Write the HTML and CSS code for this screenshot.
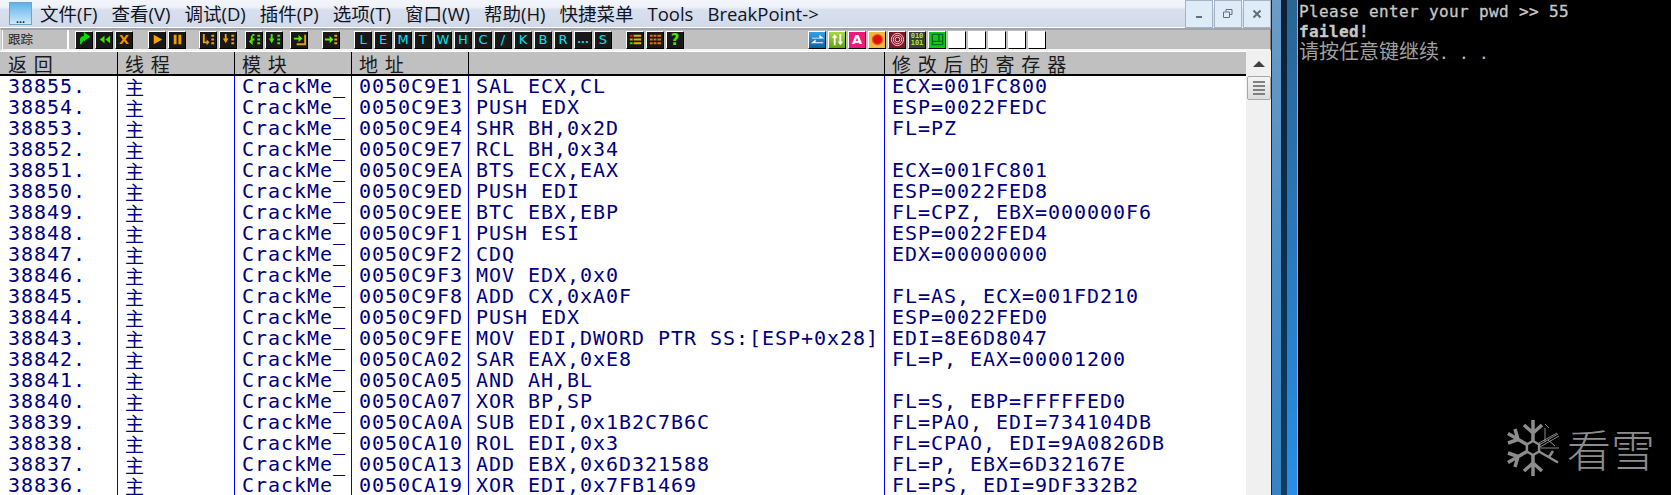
FILE: index.html
```html
<!DOCTYPE html>
<html lang="zh">
<head>
<meta charset="utf-8">
<title>OllyDbg trace</title>
<link rel="stylesheet" href="styles.css">
</head>
<body>
<main class="debugger">
  <header class="titlebar">
    <div class="appicon"><span>...</span></div>
    <nav class="menu">
      <span>文件(F)</span><span>查看(V)</span><span>调试(D)</span><span>插件(P)</span><span>选项(T)</span><span>窗口(W)</span><span>帮助(H)</span><span>快捷菜单</span><span>Tools</span><span>BreakPoint-&gt;</span>
    </nav>
    <div class="winbtns">
      <div class="winbtn"><svg width="10" height="10" viewBox="0 0 10 10"><rect x="2" y="7" width="6" height="2" fill="#5f6f80"/></svg></div>
      <div class="winbtn"><svg width="10" height="10" viewBox="0 0 10 10"><path d="M3 2.5V.5h6v5H7M.5 3h6v5.5h-6z" fill="none" stroke="#5f6f80"/></svg></div>
      <div class="winbtn"><svg width="10" height="10" viewBox="0 0 10 10"><path d="M1.5 1.500l7 7M8.500 1.500l-7 7" stroke="#5f6f80" stroke-width="2"/></svg></div>
    </div>
  </header>
  <div class="toolbar">
    <div class="tlabel">跟踪</div>
    <div class="tgroup g1">
      <div class="tb"><svg viewBox="0 0 16 16"><path d="M4 13V8q0-3 4-3h2M8 1.500l5 3.500-5 3.500z" fill="#00e000" stroke="#00e000" stroke-width="1.500"/></svg></div>
      <div class="tb"><svg viewBox="0 0 16 16"><path d="M8 4v8L3 8zM14 4v8L9 8z" fill="#40e000"/></svg></div>
      <div class="tb"><b class="amber">X</b></div>
    </div>
    <div class="tgroup g2">
      <div class="tb"><svg viewBox="0 0 16 16"><path d="M4 3l9 5-9 5z" fill="#ffa000"/></svg></div>
      <div class="tb"><svg viewBox="0 0 16 16"><path d="M4 3h3v10H4zM9 3h3v10H9z" fill="#e8a000"/></svg></div>
    </div>
    <div class="tgroup g3">
      <div class="tb"><svg viewBox="0 0 16 16"><path d="M2 2h2v8h2V8l3 3-3 3v-2H2zM11 3h3v2h-3zM11 7h3v2h-3zM11 11h3v2h-3z" fill="#f0a000"/></svg></div>
      <div class="tb"><svg viewBox="0 0 16 16"><path d="M4 2h2v5h2l-3 5-3-5h2zM11 3h3v2h-3zM11 7h3v2h-3zM11 11h3v2h-3z" fill="#f0a000"/></svg></div>
    </div>
    <div class="tgroup g4">
      <div class="tb"><svg viewBox="0 0 16 16"><path d="M6 2h2v2H6v3h2v2H6v5L2 10l2-2V5zM11 3h3v2h-3zM11 7h3v2h-3zM11 11h3v2h-3z" fill="#50e000"/></svg></div>
      <div class="tb"><svg viewBox="0 0 16 16"><path d="M4 2h2v5h2l-3 5-3-5h2zM11 3h3v2h-3zM11 7h3v2h-3zM11 11h3v2h-3z" fill="#50e000"/></svg></div>
    </div>
    <div class="tgroup g5">
      <div class="tb"><svg viewBox="0 0 16 16"><path d="M2 6h5V3l4 4-4 4V8H2z" fill="#50f000"/><path d="M13 3h2v11H5v-2h8z" fill="#e0a000"/></svg></div>
    </div>
    <div class="tgroup g6">
      <div class="tb"><svg viewBox="0 0 16 16"><path d="M1 7h5V4l4 4-4 4V9H1z" fill="#50f000"/><path d="M11 3h3v2h-3zM11 7h3v2h-3zM11 11h3v2h-3z" fill="#f0a000"/></svg></div>
    </div>
    <div class="tgroup g7">
      <div class="tb"><b>L</b></div><div class="tb"><b>E</b></div><div class="tb"><b>M</b></div><div class="tb"><b>T</b></div><div class="tb"><b>W</b></div><div class="tb"><b>H</b></div><div class="tb"><b>C</b></div><div class="tb"><b>/</b></div><div class="tb"><b>K</b></div><div class="tb"><b>B</b></div><div class="tb"><b>R</b></div><div class="tb"><b class="dots">...</b></div><div class="tb"><b>S</b></div>
    </div>
    <div class="tgroup g8">
      <div class="tb"><svg viewBox="0 0 16 16"><path d="M2 3h3v2H2z" fill="#e02000"/><path d="M2 7h3v2H2z" fill="#f0a000"/><path d="M2 11h3v2H2z" fill="#50d000"/><path d="M6 3h8v2H6zM6 7h8v2H6zM6 11h8v2H6z" fill="#e0b000"/></svg></div>
      <div class="tb"><svg viewBox="0 0 16 16"><path d="M2 3h3v2H2zM6 3h3v2H6zM10 3h4v2h-4zM2 7h3v2H2zM6 7h3v2H6zM10 7h4v2h-4zM2 11h3v2H2zM6 11h3v2H6zM10 11h4v2h-4z" fill="#e07000"/></svg></div>
      <div class="tb"><b class="help">?</b></div>
    </div>
    <div class="tgroup g9">
      <div class="tc blue"><svg viewBox="0 0 16 16"><path d="M2 5h8V2l5 4H2zM14 10H6V7L1 11h13z" fill="#fff" transform="translate(0 1)"/></svg></div>
      <div class="tc lime"><svg viewBox="0 0 16 16"><path d="M5 2l3 4H6v8H4V6H2zM11 14l3-4h-2V2h-2v8H8z" fill="#fff"/></svg></div>
      <div class="tc pink"><b>A</b></div>
      <div class="tc orange"><svg viewBox="0 0 16 16"><circle cx="8" cy="8" r="6" fill="#e85010"/><circle cx="8" cy="8" r="4.500" fill="#e01010"/></svg></div>
      <div class="tc maroon"><svg viewBox="0 0 16 16"><g fill="none" stroke="#f0d0d0"><circle cx="8" cy="8" r="6.500"/><circle cx="8" cy="8" r="4.500"/><circle cx="8" cy="8" r="2.500"/></g></svg></div>
      <div class="tc slate"><span>010<br>101</span></div>
      <div class="tc green"><svg viewBox="0 0 16 16"><path d="M2.500 2.500h11v11h-11zM2.500 10h11M9.500 2.500V10" fill="none" stroke="#063" stroke-width="1.500"/></svg></div>
      <div class="tc"></div><div class="tc"></div><div class="tc"></div><div class="tc"></div><div class="tc"></div>
    </div>
  </div>
  <section class="listing">
    <div class="table">
      <div class="row head"><div>返 回</div><div>线 程</div><div>模 块</div><div>地 址</div><div></div><div>修 改 后 的 寄 存 器</div></div>
      <div class="row"><div>38855.</div><div class="th">主</div><div>CrackMe_</div><div>0050C9E1</div><div>SAL ECX,CL</div><div>ECX=001FC800</div></div>
      <div class="row"><div>38854.</div><div class="th">主</div><div>CrackMe_</div><div>0050C9E3</div><div>PUSH EDX</div><div>ESP=0022FEDC</div></div>
      <div class="row"><div>38853.</div><div class="th">主</div><div>CrackMe_</div><div>0050C9E4</div><div>SHR BH,0x2D</div><div>FL=PZ</div></div>
      <div class="row"><div>38852.</div><div class="th">主</div><div>CrackMe_</div><div>0050C9E7</div><div>RCL BH,0x34</div><div></div></div>
      <div class="row"><div>38851.</div><div class="th">主</div><div>CrackMe_</div><div>0050C9EA</div><div>BTS ECX,EAX</div><div>ECX=001FC801</div></div>
      <div class="row"><div>38850.</div><div class="th">主</div><div>CrackMe_</div><div>0050C9ED</div><div>PUSH EDI</div><div>ESP=0022FED8</div></div>
      <div class="row"><div>38849.</div><div class="th">主</div><div>CrackMe_</div><div>0050C9EE</div><div>BTC EBX,EBP</div><div>FL=CPZ, EBX=000000F6</div></div>
      <div class="row"><div>38848.</div><div class="th">主</div><div>CrackMe_</div><div>0050C9F1</div><div>PUSH ESI</div><div>ESP=0022FED4</div></div>
      <div class="row"><div>38847.</div><div class="th">主</div><div>CrackMe_</div><div>0050C9F2</div><div>CDQ</div><div>EDX=00000000</div></div>
      <div class="row"><div>38846.</div><div class="th">主</div><div>CrackMe_</div><div>0050C9F3</div><div>MOV EDX,0x0</div><div></div></div>
      <div class="row"><div>38845.</div><div class="th">主</div><div>CrackMe_</div><div>0050C9F8</div><div>ADD CX,0xA0F</div><div>FL=AS, ECX=001FD210</div></div>
      <div class="row"><div>38844.</div><div class="th">主</div><div>CrackMe_</div><div>0050C9FD</div><div>PUSH EDX</div><div>ESP=0022FED0</div></div>
      <div class="row"><div>38843.</div><div class="th">主</div><div>CrackMe_</div><div>0050C9FE</div><div>MOV EDI,DWORD PTR SS:[ESP+0x28]</div><div>EDI=8E6D8047</div></div>
      <div class="row"><div>38842.</div><div class="th">主</div><div>CrackMe_</div><div>0050CA02</div><div>SAR EAX,0xE8</div><div>FL=P, EAX=00001200</div></div>
      <div class="row"><div>38841.</div><div class="th">主</div><div>CrackMe_</div><div>0050CA05</div><div>AND AH,BL</div><div></div></div>
      <div class="row"><div>38840.</div><div class="th">主</div><div>CrackMe_</div><div>0050CA07</div><div>XOR BP,SP</div><div>FL=S, EBP=FFFFFED0</div></div>
      <div class="row"><div>38839.</div><div class="th">主</div><div>CrackMe_</div><div>0050CA0A</div><div>SUB EDI,0x1B2C7B6C</div><div>FL=PAO, EDI=734104DB</div></div>
      <div class="row"><div>38838.</div><div class="th">主</div><div>CrackMe_</div><div>0050CA10</div><div>ROL EDI,0x3</div><div>FL=CPAO, EDI=9A0826DB</div></div>
      <div class="row"><div>38837.</div><div class="th">主</div><div>CrackMe_</div><div>0050CA13</div><div>ADD EBX,0x6D321588</div><div>FL=P, EBX=6D32167E</div></div>
      <div class="row"><div>38836.</div><div class="th">主</div><div>CrackMe_</div><div>0050CA19</div><div>XOR EDI,0x7FB1469</div><div>FL=PS, EDI=9DF332B2</div></div>
    </div>
    <aside class="scrollbar">
      <svg class="arrow" width="12" height="7" viewBox="0 0 12 7"><path d="M6 0l6 6H0z" fill="#404040"/></svg>
      <div class="thumb"><i></i><i></i><i></i><i></i></div>
    </aside>
  </section>
</main>
<div class="frame"><div class="f1"></div><div class="f2"></div><div class="f3"></div></div>
<section class="console">
  <div class="cline">Please enter your pwd &gt;&gt; 55</div>
  <div class="cline bold">failed!</div>
  <div class="cline cjk">请按任意键继续<span>. . .</span></div>
  <div class="logo">
    <svg width="60" height="60" viewBox="-30 -30 60 60">
      <g fill="none" stroke="#8c8c8c" stroke-width="3.500">
        <path d="M0-7L6.100-3.500V3.500L0 7-6.100 3.500V-3.500z" stroke-width="2.500"/>
        <path d="M0-7V-28M0-15L-9-23M0-15L9-23"/>
        <path d="M0 7V28M0 15L-9 23M0 15L9 23"/>
        <path d="M-6-3.500L-25-14.500M-15-8.500L-18-19M-15-8.500L-25-5"/>
        <path d="M-6 3.500L-25 14.500M-15 8.500L-18 19M-15 8.500L-25 5"/>
        <path d="M6 3.500L25 14.500M16 9L20 3"  stroke-width="2.500"/>
      </g>
      <g fill="none" stroke="#9a9a9a" stroke-width=".9">
        <path d="M6-3L25-14M7-1L26-12M6-5L24-15M12-6L12-20M15-8L22-2M8 0L26 0M16-20L12-24"/>
      </g>
    </svg>
    <span>看雪</span>
  </div>
</section>
</body>
</html>
```
FILE: styles.css
```css
* { box-sizing: border-box; }
html, body { margin: 0; height: 495px; overflow: hidden; }
body { display: flex; width: 1671px; background: #000; }

.debugger { width: 1271px; height: 495px; flex: none; background: #fff; display: flex; flex-direction: column; overflow: hidden; }

.titlebar { height: 27px; flex: none; display: flex; background: linear-gradient(#f3f5fb 0, #eef1f8 7px, #d8dfee 10px, #d2daea 27px); position: relative; }
.appicon { width: 23px; height: 23px; margin: 2px 0 0 9px; flex: none; background: linear-gradient(#5fb2ea, #cfe8fa); border: 1px solid #6aa5cf; display: flex; align-items: flex-end; justify-content: center; }
.appicon span { font: bold 11px/9px "Liberation Sans", sans-serif; color: #123; }
.menu { display: flex; margin-left: 8px; font: 18.500px/27px "Open Sans", "Noto Sans CJK SC", sans-serif; color: #10141c; white-space: nowrap; }
.menu span { margin-right: 14px; }
.winbtns { margin-left: auto; display: flex; gap: 1px; }
.winbtn { width: 28px; height: 28px; background: #dfebf7; border: 1px solid #a3b4c6; display: flex; align-items: center; justify-content: center; }

.toolbar { height: 23px; margin-top: 1px; flex: none; background: #c0c0c0; border: 1px solid #8c8c8c; border-width: 2px 1px 2px 1px; border-color: #a0a4ac #808080 #f4f4f4 #d8d8d8; display: flex; align-items: center; padding-left: 1px; }
.tlabel { width: 67px; height: 19px; border-right: 2px solid #fff; border-left: 1px solid #fff; font: 12.500px/18px "Noto Sans CJK SC", sans-serif; color: #222; padding-left: 5px; flex: none; }
.tgroup { display: flex; gap: 2px; flex: none; }
.g1 { margin-left: 6px; }
.g2 { margin-left: 15px; }
.g3 { margin-left: 13px; }
.g4 { margin-left: 8px; }
.g5 { margin-left: 7px; }
.g6 { margin-left: 14px; }
.g7 { margin-left: 14px; }
.g8 { margin-left: 14px; }
.g9 { margin-left: 124px; }
.tb, .tc { width: 18px; height: 18px; flex: none; border: 1px solid #000; border-color: #fff #000 #000 #fff; display: flex; align-items: center; justify-content: center; overflow: hidden; }
.tb { background: #181818; border-radius: 1px; }
.tb svg, .tc svg { width: 15px; height: 15px; display: block; }
.tb b { font: 13px/16px "DejaVu Sans", sans-serif; color: #00e4e8; }
.tb b.amber { color: #f09000; font-weight: bold; }
.tb b.dots { font-weight: bold; font-size: 10px; line-height: 14px; }
.tb b.help { color: #50e000; font-weight: bold; font-size: 15px; }
.tc { background: #fff; }
.blue { background: linear-gradient(#35a0e8, #1060a0); }
.lime { background: linear-gradient(#a8d840, #60a010); }
.pink { background: #f01878; }
.pink b { font: bold 13px/16px "DejaVu Sans", sans-serif; color: #fff; }
.orange { background: #f0b840; }
.maroon { background: #801828; }
.slate { background: #3c4038; }
.slate span { font: bold 7px/7px "DejaVu Sans Mono", monospace; color: #b0e040; text-align: center; }
.green { background: #10c810; }

.listing { flex: 1; display: flex; min-height: 0; background: #fff; margin-top: 0; }
.table { width: 1246px; flex: none; }
.row { display: grid; grid-template-columns: 118px 117px 117px 117px 416px 361px; height: 21px; font: 20px/21px "DejaVu Sans Mono", monospace; letter-spacing: .96px; color: #000080; white-space: pre; }
.row > div { padding-left: 7px; border-right: 1px solid #0000ff; }
.row > div:first-child { padding-left: 8px; }
.row > div:last-child { border-right: 0; }
.row .th { font: 19px/21px "Noto Sans CJK SC", sans-serif; letter-spacing: 0; }
.row.head { height: 25px; background: #c0c0c0; border-top: 1px solid #fff; border-bottom: 2px solid #000; font: 19px/23px "Noto Sans CJK SC", sans-serif; letter-spacing: 1.300px; color: #1a1a1a; }
.row.head > div { border-right: 1px solid #000; }
.row.head > div:last-child { border-right: 0; }

.scrollbar { flex: 1; background: #f0f0f0; display: flex; flex-direction: column; align-items: center; padding-top: 10px; }
.arrow { flex: none; }
.thumb { width: 24px; height: 24px; margin-top: 8px; border: 1px solid #a8a8a8; border-radius: 2px; background: linear-gradient(#f4f4f4, #dcdcdc); display: flex; flex-direction: column; gap: 2px; align-items: center; justify-content: center; }
.thumb i { width: 12px; height: 2px; background: #808080; display: block; }

.frame { width: 27px; flex: none; height: 495px; display: flex; border-left: 1px solid #222; }
.f1 { width: 9px; background: linear-gradient(#6d9cc4, #4a8cc4 50%, #3682c4); }
.f2 { width: 6px; background: linear-gradient(#0a2038, #0e3e60); }
.f3 { width: 11px; background: linear-gradient(#2a6494, #2a8ee6); border-right: 1px solid #6ab8f0; }

.console { flex: 1; height: 495px; background: #000; color: #c8c8c8; position: relative; padding: 2px 0 0 1px; }
.cline { height: 20px; font: 16px/20px "DejaVu Sans Mono", monospace; letter-spacing: .37px; white-space: pre; -webkit-text-stroke: .3px #c8c8c8; }
.cline.bold { font-weight: bold; }
.cline.cjk { font: 20px/20px "Noto Sans CJK SC", sans-serif; letter-spacing: 0; color: #a0a0a0; margin-top: -1px; -webkit-text-stroke: 0; }
.cline.cjk span { font: 16px/20px "DejaVu Sans Mono", monospace; letter-spacing: .37px; color: #c0c0c0; }
.logo { position: absolute; left: 205px; top: 418px; display: flex; align-items: center; gap: 4px; color: #8c8c8c; }
.logo span { font: 300 44px/60px "Noto Sans CJK SC", sans-serif; white-space: nowrap; }
```
